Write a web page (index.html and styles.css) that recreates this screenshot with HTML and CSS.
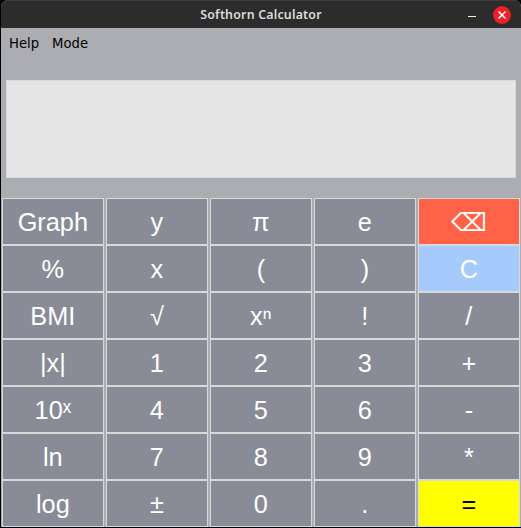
FILE: index.html
```html
<!DOCTYPE html>
<html lang="en">
<head>
<meta charset="utf-8">
<title>Softhorn Calculator</title>
<link rel="stylesheet" href="styles.css">
</head>
<body>
<div class="window">
  <header class="titlebar">
    <h1 class="title">Softhorn Calculator</h1>
    <div class="controls">
      <svg class="minimize" width="8" height="1" viewBox="0 0 8 1"><path d="M0 .5H8" stroke="#f0f0f0"/></svg>
      <svg class="close" width="18" height="18" viewBox="0 0 18 18"><circle cx="9" cy="9" r="9" fill="#ed1f27"/><path d="M5.5 5.5L12.5 12.5M12.5 5.5L5.5 12.5" stroke="#fff" stroke-width="1.5"/></svg>
    </div>
  </header>
  <nav class="menu"><span>Help</span><span>Mode</span></nav>
  <div class="display"></div>
  <main class="keys">
    <button>Graph</button><button>y</button><button>π</button><button>e</button><button class="erase">⌫</button>
    <button>%</button><button>x</button><button>(</button><button>)</button><button class="clear">C</button>
    <button>BMI</button><button>√</button><button>xⁿ</button><button>!</button><button>/</button>
    <button>|x|</button><button>1</button><button>2</button><button>3</button><button>+</button>
    <button>10ˣ</button><button>4</button><button>5</button><button>6</button><button>-</button>
    <button>ln</button><button>7</button><button>8</button><button>9</button><button>*</button>
    <button>log</button><button>±</button><button>0</button><button>.</button><button class="equals">=</button>
  </main>
</div>
</body>
</html>
```
FILE: styles.css
```css
* { box-sizing: border-box; }
body { margin: 0; background: #000; overflow: hidden; }
.window {
  width: 520px;
  height: 527px;
  margin-left: 1px;
  display: flex;
  flex-direction: column;
  background: #acadb2;
  border-radius: 7px 7px 0 0;
  overflow: hidden;
}
.titlebar {
  height: 28px;
  display: grid;
  grid-template-columns: 1fr auto 1fr;
  align-items: center;
  background: #2c2c2c;
  border-top: 1px solid #3d3d3d;
}
.title {
  grid-column: 2;
  margin: 0;
  font: 600 12.4px/27px "Noto Sans", "Open Sans", sans-serif;
  letter-spacing: 0.2px;
  color: #dcdcdc;
}
.controls {
  display: flex;
  justify-content: flex-end;
  align-items: center;
  gap: 17px;
  padding-right: 10px;
}
.minimize { margin-top: 4px; }
.menu {
  height: 30px;
  display: flex;
  gap: 13px;
  padding-left: 8px;
  font: 14.67px/30px "DejaVu Sans Condensed", "DejaVu Sans", sans-serif;
  font-stretch: condensed;
  color: #000;
}
.display {
  height: 98px;
  margin: 22px 5px 20px 5px;
  background: #e5e5e5;
  border: 1px solid #d9d9d9;
}
.keys {
  display: grid;
  grid-template-columns: repeat(5, 102px);
  grid-auto-rows: 47px;
  column-gap: 2px;
  padding-left: 1px;
}
button {
  padding: 2px 0.3px 0 0;
  background: #898b96;
  border: 1px solid #d9d9d9;
  border-radius: 0;
  font: 25.33px/43px "Liberation Sans", "DejaVu Sans", sans-serif;
  color: #fff;
}
.erase { background: #ff6347; }
.clear { background: #a5cafb; }
.equals { background: #ff0; color: #000; }
```
